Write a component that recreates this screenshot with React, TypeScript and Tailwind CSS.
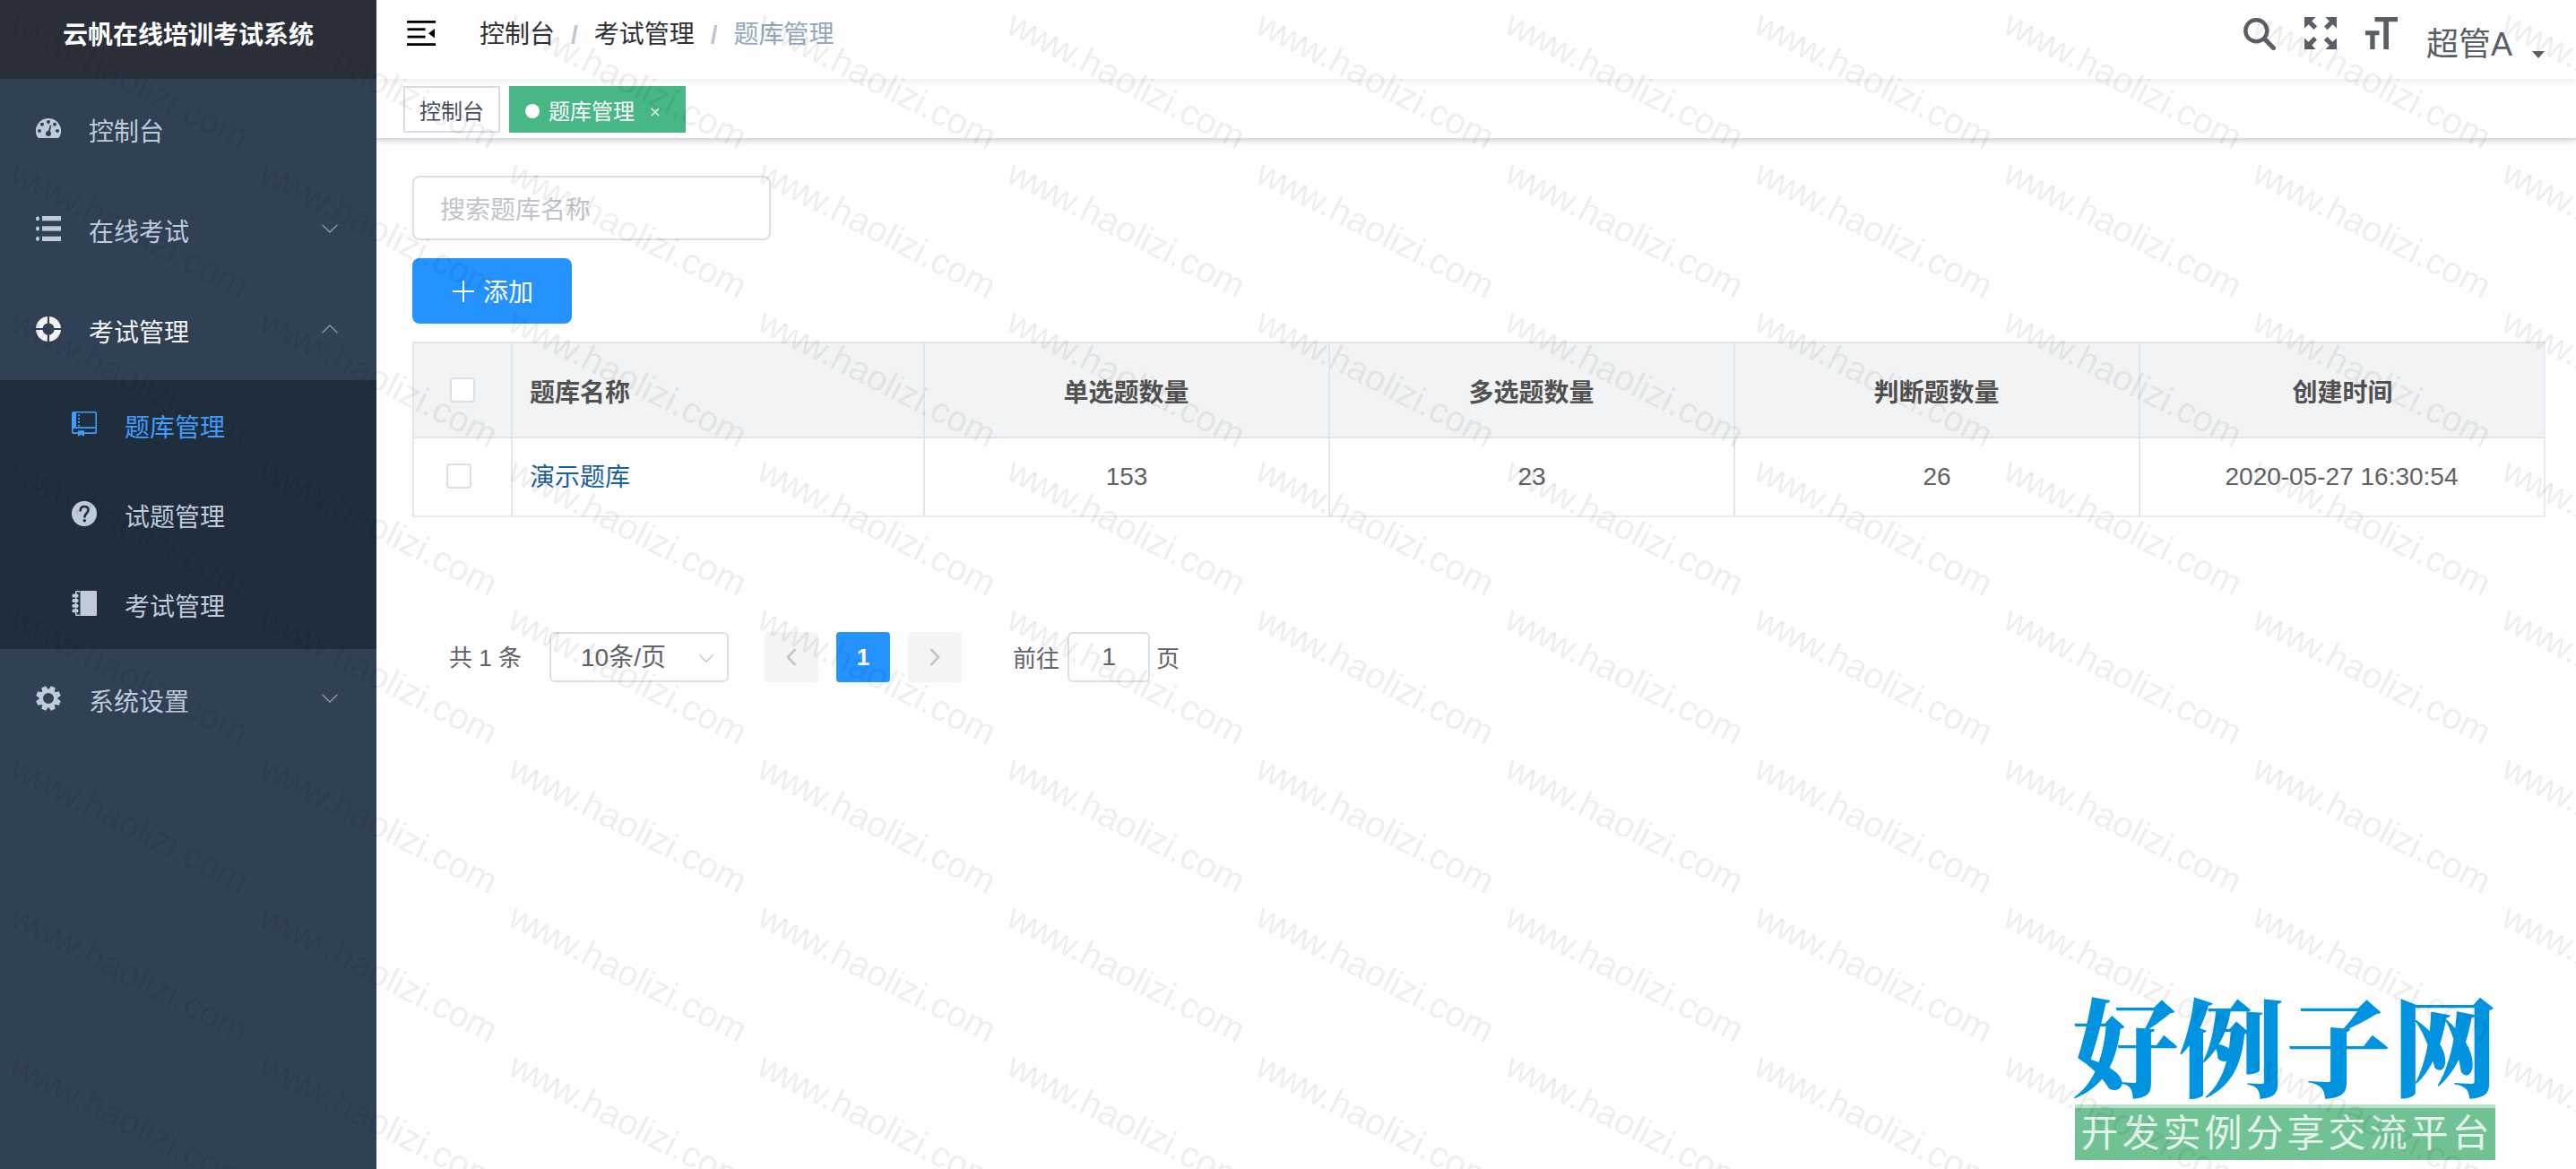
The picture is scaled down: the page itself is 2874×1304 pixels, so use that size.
import React from 'react';

type IconProps = { className?: string };

const DashboardIcon = ({ className }: IconProps) => (
  <svg viewBox="0 0 28 28" className={className} fill="currentColor">
    <path d="M14 3a14 14 0 0 1 12 21.2q-.5.8-1.300.8H3.300q-.8 0-1.300-.8A14 14 0 0 1 14 3z" />
    <g fill="#304156">
      <circle cx="14" cy="7" r="2" />
      <circle cx="7" cy="9.800" r="2" />
      <circle cx="21" cy="9.800" r="2" />
      <circle cx="4" cy="17" r="2" />
      <circle cx="24" cy="17" r="2" />
      <circle cx="14" cy="20" r="3" />
      <path d="M13.300 19l2.500-8.500 1.500.4-1.800 8.600z" />
    </g>
  </svg>
);

const ListIcon = ({ className }: IconProps) => (
  <svg viewBox="0 0 28 28" className={className} fill="currentColor">
    <rect x="7" y="0" width="21" height="5.300" />
    <rect x="7" y="11.300" width="21" height="5.300" />
    <rect x="7" y="22.700" width="21" height="5.300" />
    <ellipse cx="2" cy="2.700" rx="2" ry="2.500" />
    <ellipse cx="2" cy="14" rx="2" ry="2.500" />
    <ellipse cx="2" cy="25.300" rx="2" ry="2.500" />
  </svg>
);

const RingIcon = ({ className }: IconProps) => (
  <svg viewBox="0 0 28 28" className={className}>
    <circle cx="14" cy="14" r="10.300" fill="none" stroke="currentColor" strokeWidth="7.400" />
    <path d="M14 0v28M0 14h28" stroke="#304156" strokeWidth="2.200" />
  </svg>
);

const BookIcon = ({ className }: IconProps) => (
  <svg viewBox="0 0 28 28" className={className}>
    <path d="M2 0h24q2 0 2 2v21q0 2-2 2H14v3l-3.500-2.200L7 28v-3H2q-2 0-2-2V2Q0 0 2 0z" fill="currentColor" />
    <path d="M5 1.600h20.400q1 0 1 1V17.300H5z" fill="#1f2d3d" />
    <path d="M2.600 19h23.800v3.500q0 .8-.8.8H14v-2H7v2H2.600q-1.200 0-1.200-2.100T2.600 19z" fill="#1f2d3d" />
    <path d="M8 3.500v13" stroke="currentColor" strokeWidth="2" strokeDasharray="1.800 2" />
  </svg>
);

const QuestionIcon = ({ className }: IconProps) => (
  <svg viewBox="0 0 28 28" className={className}>
    <circle cx="14" cy="14" r="14" fill="currentColor" />
    <path d="M9.700 10.400C9.700 7.600 11.500 6 14.100 6s4.400 1.500 4.400 4c0 3.600-4 3.600-4 7.400" fill="none" stroke="#1f2d3d" strokeWidth="2.600" strokeLinecap="round" />
    <circle cx="14.300" cy="21.700" r="1.800" fill="#1f2d3d" />
  </svg>
);

const NotebookIcon = ({ className }: IconProps) => (
  <svg viewBox="0 0 28 28" className={className} fill="currentColor">
    <path d="M5 0h4v1.500H5.500v25H9V28H5q-1 0-1-1V1q0-1 1-1z" />
    <path d="M9.500 0H27q1 0 1 1v26q0 1-1 1H9.500z" />
    <rect x="0.500" y="3.500" width="7" height="4" rx="1.500" />
    <rect x="0.500" y="9" width="7" height="4" rx="1.500" />
    <rect x="0.500" y="14.700" width="7" height="4" rx="1.500" />
    <rect x="0.500" y="20.300" width="7" height="4" rx="1.500" />
  </svg>
);

const GearIcon = ({ className }: IconProps) => (
  <svg viewBox="-14 -14 28 28" className={className} fill="currentColor">
    <circle r="8.200" fill="none" stroke="currentColor" strokeWidth="4.400" />
    {[22.5, 67.5, 112.5, 157.5, 202.5, 247.5, 292.5, 337.5].map((a) => (
      <path key={a} d="M-3.500-9.200L-2.600-13.800H2.600L3.500-9.200z" transform={`rotate(${a})`} />
    ))}
  </svg>
);

const Chevron = ({ className }: IconProps) => (
  <svg viewBox="0 0 18 10" className={className} fill="none" stroke="currentColor" strokeWidth="1.500">
    <path d="M.6.700L9 9 17.400.700" />
  </svg>
);

const HamburgerIcon = ({ className }: IconProps) => (
  <svg viewBox="0 0 32 28" className={className} fill="#000">
    <rect width="32" height="2.800" />
    <rect x="0.500" y="8.300" width="20" height="2.800" />
    <rect x="0.500" y="16.700" width="20" height="2.800" />
    <rect y="25.200" width="32" height="2.800" />
    <path d="M31 9v10.500L24 14.200z" />
  </svg>
);

const SearchIcon = ({ className }: IconProps) => (
  <svg viewBox="0 0 36 36" className={className} fill="none" stroke="currentColor">
    <circle cx="14.300" cy="14.300" r="12" strokeWidth="4.400" />
    <path d="M23.500 23.500L33.500 33.500" strokeWidth="5.200" strokeLinecap="round" />
  </svg>
);

const ExpandIcon = ({ className }: IconProps) => (
  <svg viewBox="-18 -18 36 36" className={className} fill="currentColor">
    {[0, 90, 180, 270].map((a) => (
      <path key={a} d="M-18-18H-5.500L-9.700-13.500-3.800-7.700-7.500-4-13.300-9.800-18-5.500z" transform={`rotate(${a})`} />
    ))}
  </svg>
);

const SizeIcon = ({ className }: IconProps) => (
  <svg viewBox="0 0 36 36" className={className} fill="currentColor">
    <path d="M10.500 0H36v5.300H26V36h-5.700V5.300h-9.800z" />
    <path d="M0 15.300h15.500v5H10.600V36H5.300V20.300H0z" />
  </svg>
);

type MenuItem = { label: string; Icon: React.FC<IconProps>; arrow?: 'down' | 'up'; open?: boolean };

const MenuRow = ({ label, Icon, arrow, open }: MenuItem) => (
  <div
    className={
      'flex h-[112px] shrink-0 items-center pl-10 pr-[43px] pb-[2px] text-[28px] ' +
      (open ? 'text-[#f4f4f5]' : 'text-[#bfcbd9]')
    }
  >
    <Icon className="size-7" />
    <span className="ml-[31px] mt-[9px] leading-10">{label}</span>
    {arrow && (
      <Chevron className={'ml-auto mb-px h-[10px] w-[18px] text-[#909399]' + (arrow === 'up' ? ' rotate-180' : '')} />
    )}
  </div>
);

const SubRow = ({ label, Icon, active }: { label: string; Icon: React.FC<IconProps>; active?: boolean }) => (
  <div className={'flex h-[100px] items-center pl-20 pb-[2px] text-[28px] ' + (active ? 'text-[#409eff]' : 'text-[#bfcbd9]')}>
    <Icon className="size-7" />
    <span className="ml-[31px] mt-[9px] leading-10">{label}</span>
  </div>
);

const Sidebar = () => (
  <aside className="flex w-[420px] shrink-0 flex-col bg-[#304156]">
    <div className="flex h-[88px] shrink-0 items-center justify-center bg-[#2b2f3a] pb-[9px] text-[28px] font-bold leading-10 text-white">
      云帆在线培训考试系统
    </div>
    <MenuRow label="控制台" Icon={DashboardIcon} />
    <MenuRow label="在线考试" Icon={ListIcon} arrow="down" />
    <MenuRow label="考试管理" Icon={RingIcon} arrow="up" open />
    <div className="bg-[#1f2d3d]">
      <SubRow label="题库管理" Icon={BookIcon} active />
      <SubRow label="试题管理" Icon={QuestionIcon} />
      <SubRow label="考试管理" Icon={NotebookIcon} />
    </div>
    <MenuRow label="系统设置" Icon={GearIcon} arrow="down" />
  </aside>
);

const Slash = () => <span className="mx-[18px] font-bold text-[#c0c4cc]">/</span>;

const Navbar = () => (
  <header className="relative z-10 flex h-[88px] shrink-0 items-start bg-[#fefefe] text-[28px] shadow-[0_2px_8px_rgba(0,21,41,0.08)]">
    <HamburgerIcon className="ml-[34px] mt-[23px] h-7 w-8" />
    <nav className="ml-[49px] mt-[19px] flex leading-10 text-[#303133]">
      <span>控制台</span>
      <Slash />
      <span>考试管理</span>
      <Slash />
      <span className="text-[#97a8be]">题库管理</span>
    </nav>
    <div className="ml-auto flex items-start pr-[35px] pt-[19px] text-[#5a5e66]">
      <SearchIcon className="mt-px size-9" />
      <ExpandIcon className="ml-8 size-9" />
      <SizeIcon className="ml-8 size-9" />
      <span className="ml-8 mt-[7px] text-[36px] leading-[48px]">超管A</span>
      <svg viewBox="0 0 14 8" className="ml-[22px] mt-[38px] h-2 w-[14px]" fill="currentColor">
        <path d="M0 0h14L7 8z" />
      </svg>
    </div>
  </header>
);

const TagsBar = () => (
  <div className="flex h-[68px] shrink-0 items-start border-b-2 border-[#d8dce5] pl-[30px] pt-2 text-[24px] shadow-[0_2px_6px_rgba(0,0,0,0.12),0_0_6px_rgba(0,0,0,0.04)]">
    <div className="flex h-[52px] w-[108px] items-center justify-center border-2 border-[#d8dce5] bg-white pt-[6px] leading-8 text-[#495060]">
      控制台
    </div>
    <div className="ml-[10px] flex h-[52px] w-[197px] items-center bg-[#47b785] pl-[18px] text-white">
      <span className="mt-1 size-4 rounded-full bg-white" />
      <span className="ml-[10px] mt-[6px] leading-8">题库管理</span>
      <svg viewBox="0 0 10 10" className="ml-[18px] mt-[6px] size-[10px]" stroke="currentColor" strokeWidth="1.300">
        <path d="M.8.800l8.400 8.400M9.200.800L.8 9.200" />
      </svg>
    </div>
  </div>
);

const Checkbox = () => <span className="size-7 rounded-[4px] border-2 border-[#dcdfe6] bg-white" />;

const columns = ['单选题数量', '多选题数量', '判断题数量', '创建时间'];
const values = ['153', '23', '26', '2020-05-27 16:30:54'];

const QuestionTable = () => (
  <div className="mt-5 w-[2380px] border-2 border-[#dfe6ec] border-b-[#e6ebf5] border-r-[#e6ebf5] text-[28px] leading-10">
    <div className="grid h-[106px] grid-cols-[110px_460px_repeat(4,452px)] border-b-2 border-[#dfe6ec] bg-[#f1f3f4] font-bold text-[#515151]">
      <div className="flex items-center justify-center border-r-2 border-[#dfe6ec]">
        <Checkbox />
      </div>
      <div className="flex items-center border-r-2 border-[#dfe6ec] pl-[19px] pt-[7px]">题库名称</div>
      {columns.map((c, i) => (
        <div
          key={c}
          className={'flex items-center justify-center border-[#dfe6ec] pr-px pt-[7px] ' + (i < 3 ? 'border-r-2' : '')}
        >
          {c}
        </div>
      ))}
    </div>
    <div className="grid h-[86px] grid-cols-[110px_460px_repeat(4,452px)] text-[#606266]">
      <div className="flex items-center border-r-2 border-[#dfe6ec] pl-9 pb-[2px]">
        <Checkbox />
      </div>
      <div className="flex items-center border-r-2 border-[#dfe6ec] pl-[19px] pt-[2px] text-[#1a5fa5]">演示题库</div>
      {values.map((v, i) => (
        <div
          key={v}
          className={'flex items-center justify-center border-[#dfe6ec] pb-px ' + (i < 3 ? 'border-r-2' : 'pr-[3px]')}
        >
          {v}
        </div>
      ))}
    </div>
  </div>
);

const Pagination = () => (
  <div className="mt-32 flex h-14 items-center pl-[41px] text-[26px] leading-9 text-[#606266]">
    <span className="mt-[2px] w-[112px]">共 1 条</span>
    <div className="flex h-14 w-[200px] items-center rounded-[6px] border-2 border-[#dcdfe6] pl-[33px] pr-[15px] text-[28px]">
      <span className="mt-[2px]">10条/页</span>
      <Chevron className="ml-auto mt-[2px] h-[9px] w-4 text-[#c0c4cc]" />
    </div>
    <div className="ml-10 flex h-14 w-[60px] items-center justify-center rounded-[4px] bg-[#f4f4f5]">
      <svg viewBox="0 0 12 20" className="h-5 w-3" fill="none" stroke="#c0c4cc" strokeWidth="2.600">
        <path d="M10.500 1L2 10l8.500 9" />
      </svg>
    </div>
    <div className="ml-5 flex h-14 w-[60px] items-center justify-center rounded-[4px] bg-[#2493ff] font-bold text-white">1</div>
    <div className="ml-5 flex h-14 w-[60px] items-center justify-center rounded-[4px] bg-[#f4f4f5]">
      <svg viewBox="0 0 12 20" className="h-5 w-3" fill="none" stroke="#c0c4cc" strokeWidth="2.600">
        <path d="M1.500 1L10 10l-8.500 9" />
      </svg>
    </div>
    <span className="ml-[57px] mt-[4px]">前往</span>
    <div className="ml-[9px] flex h-14 w-[92px] items-center justify-center rounded-[6px] border-2 border-[#dcdfe6] text-[28px]">1</div>
    <span className="ml-[7px] mt-[4px]">页</span>
  </div>
);

const SiteLogo = () => (
  <div className="absolute left-[2312px] top-[1098px] w-[474px]">
    <div className="h-[134px] whitespace-nowrap font-['Noto_Serif_CJK_SC','Noto_Sans_CJK_SC',serif] text-[118px] font-black leading-[130px] tracking-[1px] text-[#0094e0]">
      好例子网
    </div>
    <div className="ml-[3px] flex h-[62px] w-[469px] items-center justify-center border-t-4 border-[#b8e0ca] bg-[#70c294] text-[42px] leading-[50px] tracking-[4px] text-white/80">
      <span className="-mr-1 whitespace-nowrap">开发实例分享交流平台</span>
    </div>
  </div>
);

const tiles = Array.from({ length: 88 }, (_, i) => i);

const Watermark = () => (
  <div className="pointer-events-none absolute inset-0 z-20 overflow-hidden">
    <div className="grid w-[3058px] auto-rows-[166px] grid-cols-[repeat(11,278px)]">
      {tiles.map((t) => (
        <div key={t} className="pl-[11px]">
          <div className="-mt-[5px] h-9 origin-bottom-left rotate-[27deg] whitespace-nowrap text-[40px] leading-[22px] text-black/[0.08]">
            <span className="inline-block pt-[16px] tracking-[-2.200px]">www</span>.haolizi.com
          </div>
        </div>
      ))}
    </div>
  </div>
);

export default function App() {
  return (
    <div className="relative flex h-[1304px] w-[2874px] overflow-hidden bg-[#fefefe] font-['Liberation_Sans','Noto_Sans_CJK_SC',sans-serif]">
      <main className="order-2 flex min-w-0 flex-1 flex-col overflow-hidden">
        <Navbar />
        <TagsBar />
        <section className="px-10 pt-10">
          <input
            placeholder="搜索题库名称"
            className="block h-[72px] w-[400px] rounded-lg border-2 border-[#dcdfe6] bg-white px-[29px] pt-[5px] text-[28px] leading-10 placeholder:text-[#c0c4cc]"
          />
          <button className="mt-5 flex h-[73px] w-[178px] items-center rounded-lg bg-[#2493ff] pl-[45px] text-[28px] leading-10 text-white">
            <svg viewBox="0 0 24 24" className="size-6" stroke="currentColor" strokeWidth="2">
              <path d="M12 0v24M0 12h24" />
            </svg>
            <span className="ml-[10px] mt-[4px]">添加</span>
          </button>
          <QuestionTable />
          <Pagination />
        </section>
      </main>
      <Sidebar />
      <SiteLogo />
      <Watermark />
    </div>
  );
}
